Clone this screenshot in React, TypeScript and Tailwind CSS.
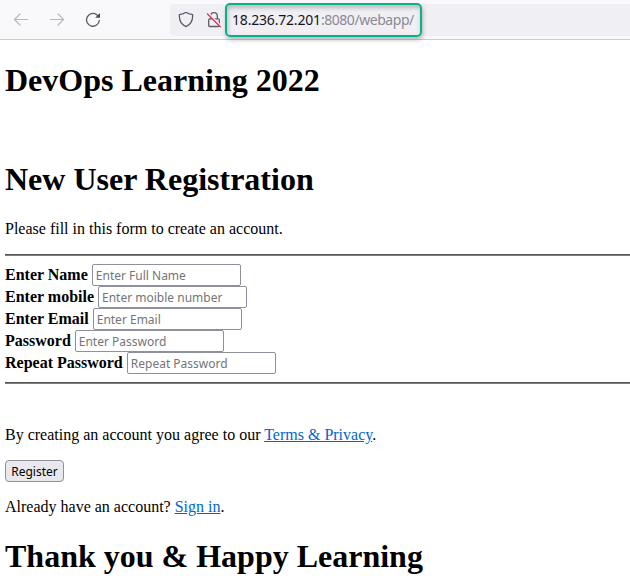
import React from "react";

type Field = { label: string; placeholder: string };

const fields: Field[] = [
  { label: "Enter Name", placeholder: "Enter Full Name" },
  { label: "Enter mobile", placeholder: "Enter moible number" },
  { label: "Enter Email", placeholder: "Enter Email" },
  { label: "Password", placeholder: "Enter Password" },
  { label: "Repeat Password", placeholder: "Repeat Password" },
];

function Toolbar() {
  return (
    <header className="flex h-10 items-center border-b border-[#cccccc] bg-[#f9f9fb] pl-[13px]">
      <svg width="16" height="16" viewBox="0 0 16 16" fill="none" stroke="#b9b9bd" strokeWidth="1.2" strokeLinecap="round" strokeLinejoin="round">
        <path d="M14.5 7.5H1.5M7 2 1.5 7.5 7 13" />
      </svg>
      <svg className="ml-5" width="16" height="16" viewBox="0 0 16 16" fill="none" stroke="#b9b9bd" strokeWidth="1.2" strokeLinecap="round" strokeLinejoin="round">
        <path d="M1.5 7.5h13M9 2 14.5 7.5 9 13" />
      </svg>
      <svg className="ml-5" width="16" height="16" viewBox="0 0 16 16" fill="none">
        <path d="M14.3 8.4A6.4 6.4 0 1 1 11.6 2.6l1.3 1.2" stroke="#5b5b66" strokeWidth="1.3" strokeLinecap="round" />
        <path d="M15 1v4.7H10.2z" fill="#4a4a55" />
      </svg>
      <div className="ml-[69px] flex h-8 flex-1 items-center rounded-l bg-[#f0f0f4] pl-2">
        <svg width="16" height="16" viewBox="0 0 16 16" fill="none" stroke="#5b5b66" strokeWidth="1.3" strokeLinejoin="round">
          <path d="M8 .2C6.3 1.6 3.700 2.300 1.400 2.600C1 8 3 12.400 8 14.700C13 12.400 15 8 14.600 2.600C12.300 2.300 9.700 1.600 8 .2Z" />
        </svg>
        <svg className="ml-3" width="16" height="16" viewBox="0 0 16 16" fill="none" stroke="#5b5b66" strokeWidth="1.3">
          <path d="M4.700 6.800V4a3.300 3.300 0 0 1 6.600 0V6.800" />
          <rect x="2.700" y="6.800" width="10.600" height="7.700" rx="1" />
          <path d="M1.500 .6 15 14.100" stroke="#f0f0f4" strokeWidth="2" />
          <path d="M1 1.500 14.700 15.200" stroke="#e8305a" strokeWidth="1.300" />
        </svg>
        <div className="ml-[3px] flex h-[34px] w-[197px] items-center rounded-[5px] border-2 border-[#0aaf8c] pl-[5px] font-['Noto_Sans',sans-serif] text-[14px] shadow-[1px_3px_4px_rgba(0,0,0,0.25),inset_1px_3px_4px_rgba(0,0,0,0.22)]">
          <span className="tracking-[-0.19px] text-[#15141a]">18.236.72.201</span>
          <span className="tracking-[-0.45px] text-[#8a8a92]">:8080/webapp/</span>
        </div>
      </div>
    </header>
  );
}

function Rule() {
  return <hr className="h-0.5 border-t border-b border-t-[#555] border-b-[#808080]" />;
}

export default function App() {
  return (
    <div className="h-[587px] w-[630px] overflow-hidden bg-white font-['Liberation_Serif',serif] text-base text-black">
      <Toolbar />
      <main className="pl-[5px]">
        <h1 className="mt-[22px] text-[32px] leading-[37px] font-bold">DevOps Learning 2022</h1>
        <h1 className="mt-[62px] text-[32px] leading-[37px] font-bold">New User Registration</h1>
        <p className="mt-[22px] mb-4 leading-[18px]">Please fill in this form to create an account.</p>
        <Rule />
        <div className="my-2">
          {fields.map((f) => (
            <div key={f.label} className="flex h-[22px] items-center">
              <label className="font-bold">{f.label}</label>
              <input
                className="ml-1 h-[22px] w-[149px] rounded-[2px] border border-[#8f8f9d] px-[3px] pt-px font-['Noto_Sans',sans-serif] text-[12px] placeholder:text-[#757575]"
                placeholder={f.placeholder}
              />
            </div>
          ))}
        </div>
        <Rule />
        <p className="mt-[42px] leading-[18px]">
          By creating an account you agree to our{" "}
          <a className="text-[#0066cc] underline">Terms &amp; Privacy</a>.
        </p>
        <button className="mt-4 flex h-[22px] w-[59px] items-center justify-center rounded-[4px] border border-[#8f8f9d] bg-[#e9e9ed] pt-px font-['Noto_Sans',sans-serif] text-[12px]">
          Register
        </button>
        <p className="mt-4 leading-[18px]">
          Already have an account? <a className="text-[#0066cc] underline">Sign in</a>.
        </p>
        <h1 className="mt-[22px] text-[32px] leading-[37px] font-bold">Thank you &amp; Happy Learning</h1>
      </main>
    </div>
  );
}
